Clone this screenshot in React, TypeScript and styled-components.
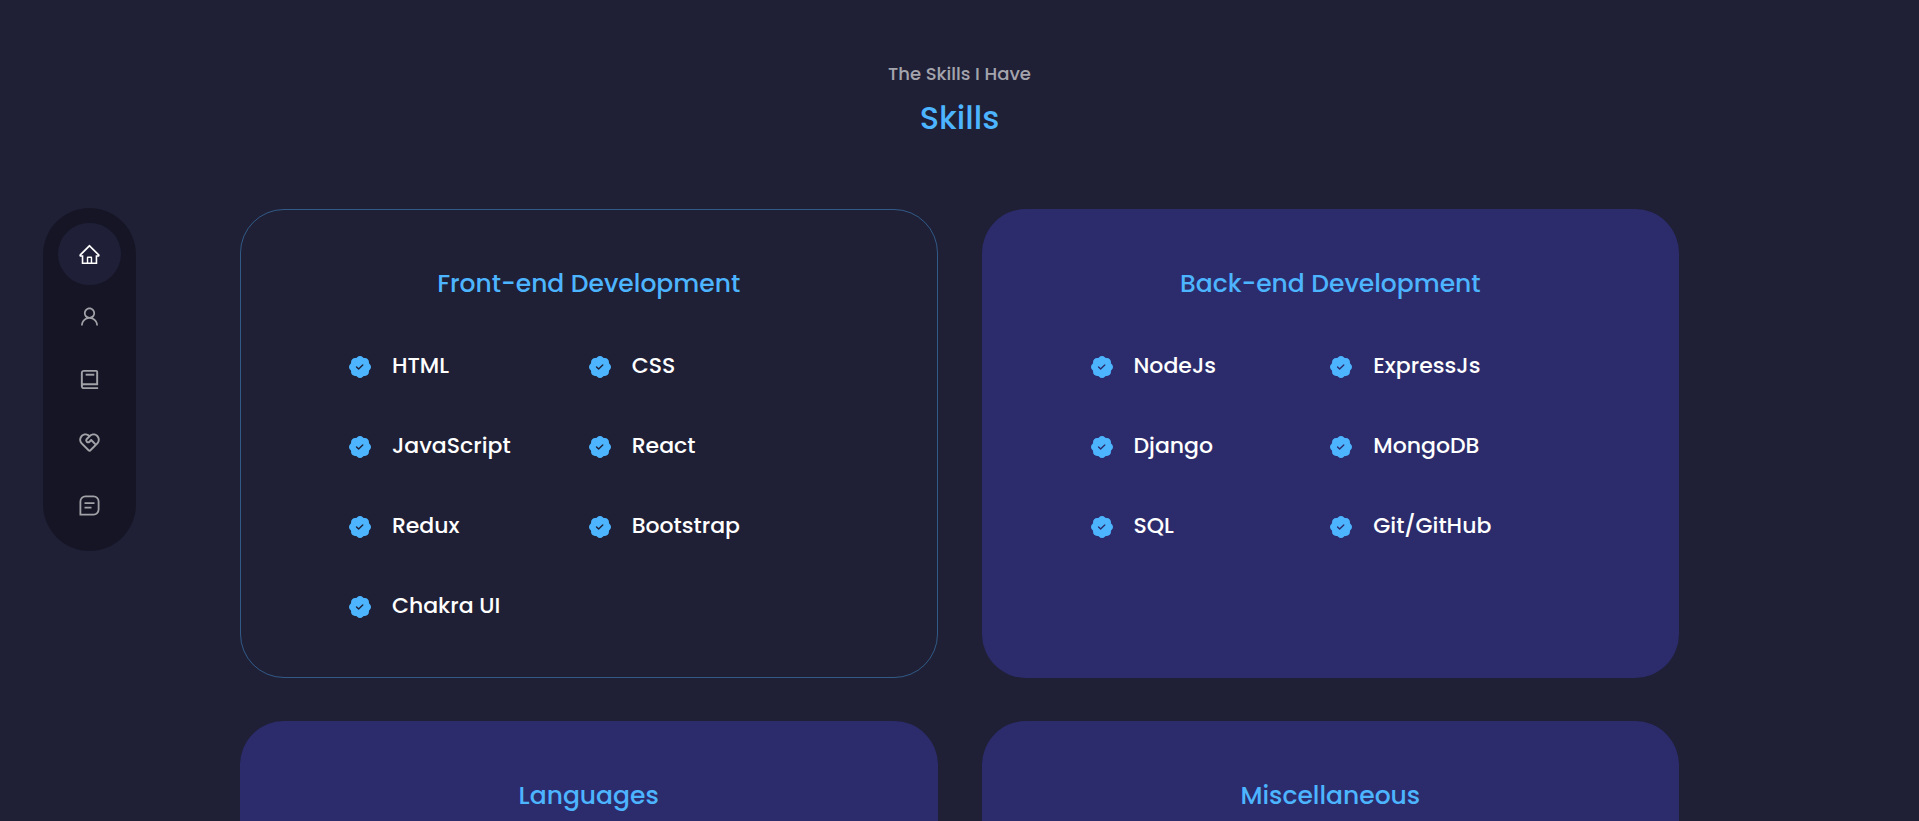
import React from 'react';
import styled, { createGlobalStyle } from 'styled-components';
import { AiOutlineHome, AiOutlineUser } from 'react-icons/ai';
import { BiBook } from 'react-icons/bi';
import { RiServiceLine } from 'react-icons/ri';
import { BsPatchCheckFill } from 'react-icons/bs';

const GlobalStyle = createGlobalStyle`
  * { box-sizing: border-box; margin: 0; padding: 0; }
  html { overflow-x: hidden; scrollbar-width: none; }
  body {
    background: #1f1f36;
    color: #fff;
    font-family: Poppins, Inter, sans-serif;
    font-size: 16px;
    line-height: 28px;
  }
`;

const Section = styled.section`
  width: 75%;
  margin: 0 auto;
  padding: 60px 0;
`;

const SectionHeader = styled.header`
  display: flex;
  flex-direction: column;
  align-items: center;
  gap: 6px;
  margin-bottom: 67px;
  text-align: center;
`;

const Eyebrow = styled.p`
  color: rgba(255, 255, 255, 0.6);
  font-size: 18px;
  font-weight: 500;
  line-height: 28px;
`;

const Title = styled.h2`
  color: #4db5ff;
  font-size: 32px;
  font-weight: 500;
  line-height: 48px;
`;

const CardGrid = styled.div`
  display: grid;
  grid-template-columns: repeat(2, minmax(0, 1fr));
  gap: 43px 44px;
`;

const Card = styled.article<{ $outlined?: boolean }>`
  padding: 54px 108px 55px;
  border: 1px solid ${(p) => (p.$outlined ? 'rgba(77, 181, 255, 0.4)' : 'transparent')};
  border-radius: 44px;
  background: ${(p) => (p.$outlined ? 'transparent' : '#2c2c6c')};
`;

const CardTitle = styled.h3`
  margin-bottom: 46px;
  color: #4db5ff;
  font-size: 25px;
  font-weight: 500;
  line-height: 40px;
  text-align: center;
`;

const SkillList = styled.ul`
  display: grid;
  grid-template-columns: repeat(2, 1fr);
  row-gap: 48px;
  list-style: none;
`;

const Skill = styled.li`
  display: flex;
  align-items: center;
  gap: 21px;
  font-size: 22px;
  font-weight: 500;
  line-height: 32px;

  svg {
    flex: none;
    width: 22px;
    height: 22px;
    margin-top: 2px;
    color: #4db5ff;
  }
`;

const Nav = styled.nav`
  position: fixed;
  top: 208px;
  left: 43px;
  z-index: 2;
  display: flex;
  flex-direction: column;
  justify-content: space-between;
  height: 343px;
  padding: 15px;
  border-radius: 48px;
  background: rgba(0, 0, 0, 0.3);
`;

const NavLink = styled.a<{ $active?: boolean }>`
  display: flex;
  align-items: center;
  justify-content: center;
  width: 63px;
  height: 62px;
  border-radius: 50%;
  background: ${(p) => (p.$active ? '#1f1f38' : 'transparent')};
  color: ${(p) => (p.$active ? '#fff' : 'rgba(255, 255, 255, 0.6)')};

  svg {
    width: 23px;
    height: 23px;
  }
`;

const NoteIcon = () => (
  <svg viewBox="0 0 23 23" fill="none" stroke="currentColor" strokeWidth="1.8" aria-hidden="true">
    <path d="M2.4 20.6V7.4a5 5 0 0 1 5-5h8.2a5 5 0 0 1 5 5v8.2a5 5 0 0 1-5 5z" />
    <path d="M6.5 9.2h10M6.5 13.6h7" />
  </svg>
);

const links = [
  { id: 'home', label: 'Home', icon: <AiOutlineHome /> },
  { id: 'about', label: 'About', icon: <AiOutlineUser /> },
  { id: 'skills', label: 'Skills', icon: <BiBook /> },
  { id: 'services', label: 'Services', icon: <RiServiceLine /> },
  { id: 'contact', label: 'Contact', icon: <NoteIcon /> },
];

const groups = [
  {
    title: 'Front-end Development',
    skills: ['HTML', 'CSS', 'JavaScript', 'React', 'Redux', 'Bootstrap', 'Chakra UI'],
    outlined: true,
  },
  {
    title: 'Back-end Development',
    skills: ['NodeJs', 'ExpressJs', 'Django', 'MongoDB', 'SQL', 'Git/GitHub'],
  },
  { title: 'Languages', skills: [] },
  { title: 'Miscellaneous', skills: [] },
];

export default function App() {
  return (
    <>
      <GlobalStyle />
      <Nav aria-label="Sections">
        {links.map((link, i) => (
          <NavLink key={link.id} href={`#${link.id}`} aria-label={link.label} $active={i === 0}>
            {link.icon}
          </NavLink>
        ))}
      </Nav>
      <Section id="skills">
        <SectionHeader>
          <Eyebrow>The Skills I Have</Eyebrow>
          <Title>Skills</Title>
        </SectionHeader>
        <CardGrid>
          {groups.map((group) => (
            <Card key={group.title} $outlined={group.outlined}>
              <CardTitle>{group.title}</CardTitle>
              {group.skills.length > 0 && (
                <SkillList>
                  {group.skills.map((skill) => (
                    <Skill key={skill}>
                      <BsPatchCheckFill aria-hidden="true" />
                      {skill}
                    </Skill>
                  ))}
                </SkillList>
              )}
            </Card>
          ))}
        </CardGrid>
      </Section>
    </>
  );
}
